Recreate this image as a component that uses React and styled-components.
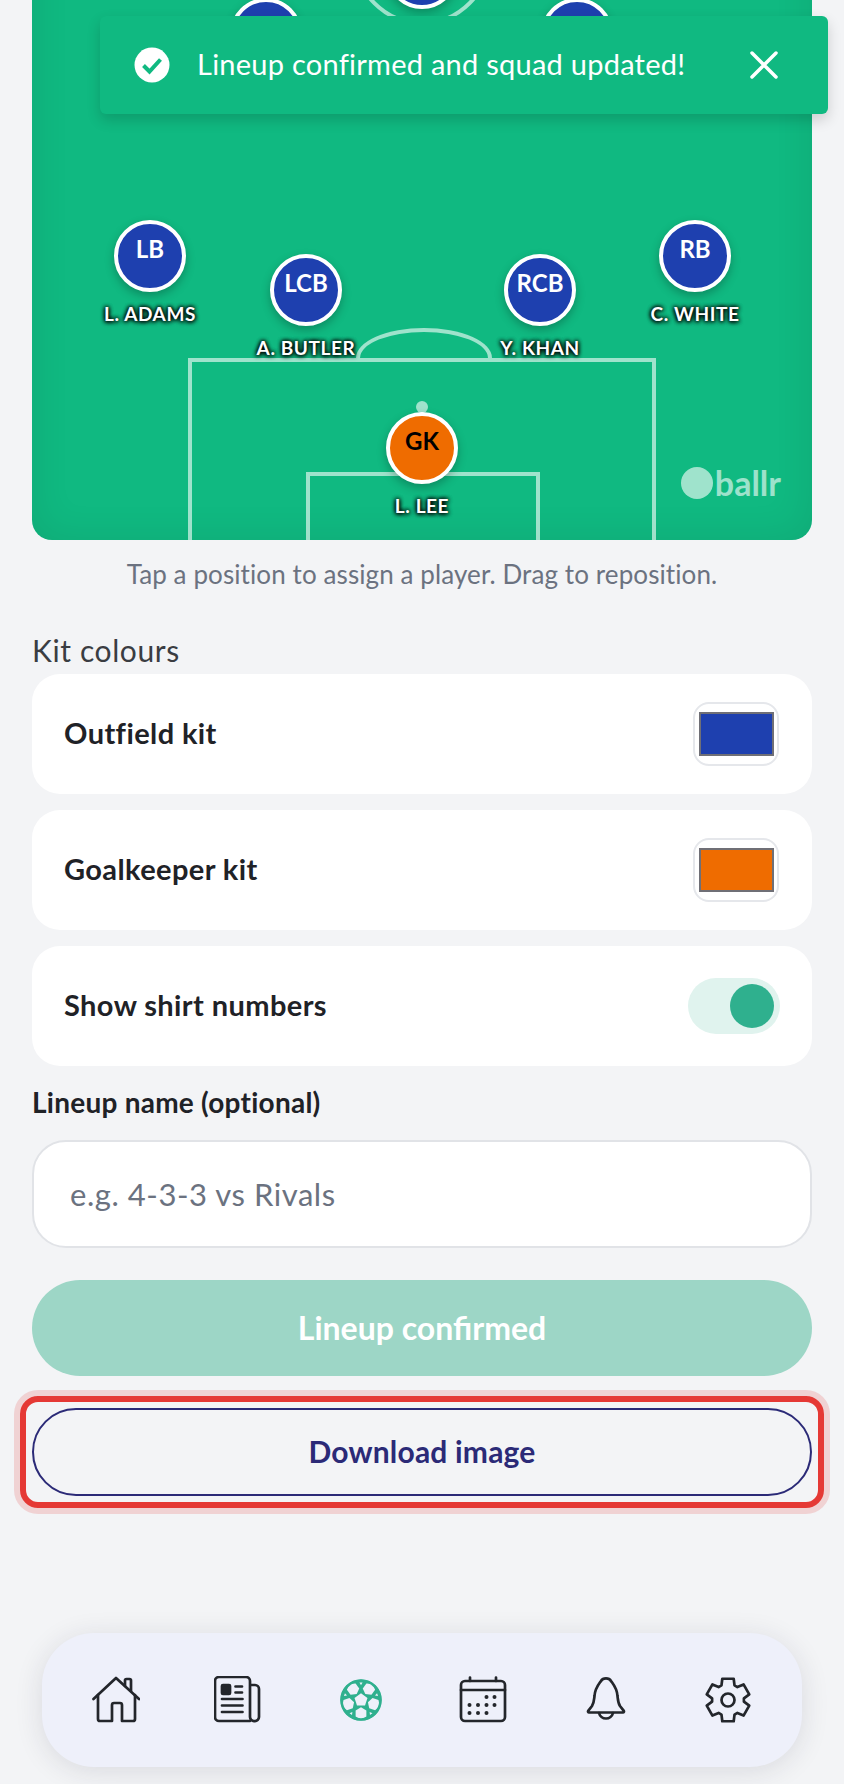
import React from "react";
import styled, { createGlobalStyle } from "styled-components";

const FONT = `"Lato", "Noto Sans", sans-serif`;

const Global = createGlobalStyle`
  html, body {
    margin: 0;
    height: 100%;
    overflow: hidden;
    background: #f3f4f6;
  }
  * { box-sizing: border-box; }
`;

const Screen = styled.div`
  position: relative;
  width: 844px;
  height: 1784px;
  overflow: hidden;
  font-family: ${FONT};
`;

// the page is scrolled, so the top of the pitch sits above the window
const Content = styled.main`
  display: flex;
  flex-direction: column;
  margin-top: -60px;
  padding: 0 32px;
`;

const Pitch = styled.section`
  position: relative;
  height: 600px;
  overflow: hidden;
  background: #10b981;
  border-radius: 0 0 20px 20px;
  box-shadow: inset 0 0 40px rgba(0, 0, 0, 0.09);
`;

const CentreCircle = styled.div`
  position: absolute;
  left: 321px;
  top: -53px;
  width: 138px;
  height: 138px;
  border: 4px solid rgba(255, 255, 255, 0.6);
  border-radius: 50%;
`;

const PenaltyBox = styled.div`
  position: absolute;
  left: 156px;
  top: 418px;
  width: 468px;
  height: 300px;
  border: 4px solid rgba(255, 255, 255, 0.6);
`;

const SixYardBox = styled.div`
  position: absolute;
  left: 274px;
  top: 532px;
  width: 234px;
  height: 200px;
  border: 4px solid rgba(255, 255, 255, 0.6);
`;

const PenaltyArc = styled.div`
  position: absolute;
  left: 324px;
  top: 388px;
  width: 136px;
  height: 30px;
  border: 4px solid rgba(255, 255, 255, 0.6);
  border-bottom: 0;
  border-radius: 68px 68px 0 0 / 30px 30px 0 0;
`;

const PenaltySpot = styled.div`
  position: absolute;
  left: 384px;
  top: 461px;
  width: 12px;
  height: 12px;
  border-radius: 50%;
  background: rgba(255, 255, 255, 0.6);
`;

const Player = styled.div`
  position: absolute;
  left: ${(p) => p.$x}px;
  top: ${(p) => p.$y}px;
  display: flex;
  flex-direction: column;
  align-items: center;
  width: 160px;
  margin-left: -80px;
`;

const Shirt = styled.div`
  display: flex;
  justify-content: center;
  width: 72px;
  height: 72px;
  padding-top: 11px;
  border: 4px solid #fff;
  border-radius: 50%;
  background: ${(p) => p.$colour};
  color: ${(p) => p.$text};
  font-size: 24px;
  font-weight: 700;
  line-height: 28px;
  box-shadow: 0 4px 10px rgba(0, 0, 0, 0.25);
`;

const PlayerName = styled.span`
  margin-top: 11px;
  color: #fff;
  font-size: 19px;
  font-weight: 700;
  letter-spacing: 0.6px;
  line-height: 22px;
  white-space: nowrap;
  text-shadow: 0 0 4px #000, 0 0 4px #000, 0 1px 5px #000;
`;

const Watermark = styled.div`
  position: absolute;
  right: 31px;
  bottom: 40px;
  display: flex;
  align-items: center;
  gap: 2px;
  color: rgba(255, 255, 255, 0.6);
  font-size: 34px;
  font-weight: 700;
  line-height: 34px;
`;

const WatermarkDot = styled.span`
  width: 32px;
  height: 32px;
  border-radius: 50%;
  background: rgba(255, 255, 255, 0.6);
`;

const Hint = styled.p`
  margin: 17px 0 0;
  color: #6b7280;
  font-size: 26px;
  letter-spacing: 0.1px;
  line-height: 34px;
  text-align: center;
`;

const SectionTitle = styled.h2`
  margin: 41px 0 0;
  color: #3a3d42;
  font-size: 30px;
  font-weight: 400;
  letter-spacing: 0.6px;
  line-height: 36px;
`;

const Rows = styled.div`
  display: flex;
  flex-direction: column;
  gap: 16px;
  margin-top: 6px;
`;

const Row = styled.div`
  display: flex;
  align-items: center;
  justify-content: space-between;
  height: 120px;
  padding: 0 32px;
  border-radius: 28px;
  background: #fff;
`;

const RowLabel = styled.span`
  margin-top: -3px;
  color: #1f2227;
  font-size: 29px;
  font-weight: 700;
  letter-spacing: 0.4px;
`;

const Swatch = styled.div`
  display: flex;
  align-items: center;
  justify-content: center;
  width: 86px;
  height: 64px;
  margin-right: 1px;
  border: 2px solid #e5e7eb;
  border-radius: 16px;
`;

const SwatchFill = styled.span`
  width: 75px;
  height: 44px;
  border: 2px solid #6f6f76;
  background: ${(p) => p.$colour};
`;

const Toggle = styled.div`
  display: flex;
  align-items: center;
  justify-content: flex-end;
  width: 92px;
  height: 56px;
  padding-right: 6px;
  border-radius: 28px;
  background: #e0f3ee;
`;

const Knob = styled.span`
  width: 44px;
  height: 44px;
  border-radius: 50%;
  background: #2fb08e;
`;

const FieldLabel = styled.label`
  margin-top: 20px;
  color: #1f2227;
  font-size: 28px;
  font-weight: 700;
  letter-spacing: 0.25px;
  line-height: 32px;
`;

const NameInput = styled.input`
  height: 108px;
  margin-top: 22px;
  padding: 0 36px;
  border: 2px solid #e1e3e7;
  border-radius: 34px;
  outline: 0;
  background: #fff;
  color: #1f2227;
  font-family: ${FONT};
  font-size: 31px;
  letter-spacing: 0.55px;

  &::placeholder {
    color: #6b7280;
    opacity: 1;
  }
`;

const Confirmed = styled.button`
  height: 96px;
  margin-top: 32px;
  padding-bottom: 2px;
  border: 0;
  border-radius: 48px;
  background: #9dd6c6;
  color: #fff;
  font-family: ${FONT};
  font-size: 32px;
  font-weight: 700;
`;

const Highlight = styled.div`
  display: flex;
  align-items: stretch;
  height: 112px;
  margin: 20px -12px 0;
  padding: 6px;
  border: 6px solid #e53935;
  border-radius: 18px;
  box-shadow: 0 0 0 6px rgba(229, 57, 53, 0.18);
`;

const DownloadButton = styled.button`
  flex: 1;
  padding-bottom: 3px;
  border: 2px solid #2b2a77;
  border-radius: 44px;
  background: transparent;
  color: #2b2a77;
  font-family: ${FONT};
  font-size: 30px;
  font-weight: 700;
  letter-spacing: 0.2px;
`;

const Toast = styled.div`
  position: absolute;
  left: 100px;
  top: 16px;
  display: flex;
  align-items: center;
  width: 728px;
  height: 98px;
  padding: 0 50px 0 34px;
  border-radius: 6px;
  background: #10b981;
  color: #fff;
  font-size: 29px;
  letter-spacing: 0.25px;
  box-shadow: 0 6px 14px rgba(0, 0, 0, 0.16);
`;

const ToastText = styled.span`
  flex: 1;
  margin: -3px 0 0 27px;
`;

const BottomNav = styled.nav`
  position: absolute;
  left: 42px;
  top: 1633px;
  display: flex;
  align-items: center;
  justify-content: space-between;
  width: 760px;
  height: 134px;
  padding: 0 50px;
  border-radius: 52px;
  background: #eef0fa;
  box-shadow: 0 4px 28px rgba(30, 34, 60, 0.12);
`;

const NavIcon = styled.svg`
  width: 48px;
  height: 48px;
  fill: none;
  stroke: ${(p) => p.$colour || "#23262b"};
  stroke-width: 2.7;
  stroke-linecap: round;
  stroke-linejoin: round;
`;

const point = (r, deg) => {
  const a = (deg * Math.PI) / 180;
  return `${(24 + r * Math.cos(a)).toFixed(2)} ${(24 + r * Math.sin(a)).toFixed(2)}`;
};

// six teeth, one straight up
const gearPath = () => {
  let d = "";
  for (let i = 0; i < 6; i++) {
    const c = -90 + i * 60;
    d += `${i ? "L" : "M"}${point(16, c - 24)} L${point(22, c - 15)} L${point(22, c + 15)} L${point(16, c + 24)} `;
  }
  return d + "Z";
};

// one panel of the ball, a ring of `sides` corners round a spot on the ball
const panel = (deg, dist, r, sides) => {
  const a = (deg * Math.PI) / 180;
  const cx = 24 + dist * Math.cos(a);
  const cy = 24 + dist * Math.sin(a);
  return Array.from({ length: sides }, (_, i) => {
    const t = ((deg + (i * 360) / sides) * Math.PI) / 180;
    return `${(cx + r * Math.cos(t)).toFixed(2)},${(cy + r * Math.sin(t)).toFixed(2)}`;
  }).join(" ");
};

const HomeIcon = () => (
  <NavIcon viewBox="0 0 48 48">
    <path d="M1.5 23 24 2l23 21" />
    <path d="M6 19v24a2 2 0 0 0 2 2h12V29a2 2 0 0 1 2-2h6a2 2 0 0 1 2 2v16h11a2 2 0 0 0 2-2V19" />
    <path d="M33 10V4.5A1.5 1.5 0 0 1 34.500 3h3A1.500 1.500 0 0 1 39 4.500V15" />
  </NavIcon>
);

const NewsIcon = () => (
  <NavIcon viewBox="0 0 48 48">
    <path d="M36 45H5a4 4 0 0 1-4-4V5a4 4 0 0 1 4-4h27a4 4 0 0 1 4 4v36a4 4 0 0 0 4.500 4 4 4 0 0 0 4.500-4V13a4 4 0 0 0-4-4h-5" />
    <rect x="8" y="9" width="8" height="9" rx="1" fill="#23262b" />
    <path d="M21.500 10.500H28M21.500 16.500H28M8 23h20.500M8 29.500h20.500M8 36h20.500" />
  </NavIcon>
);

const BallIcon = () => (
  <NavIcon viewBox="0 0 48 48" $colour="#2fb08e">
    <circle cx="24" cy="24" r="20.500" fill="#2fb08e" stroke="none" />
    <polygon points={panel(-90, 0, 6.8, 5)} fill="#eef0fa" stroke="none" />
    {[-126, -54, 18, 90, 162].map((d) => (
      <polygon key={d} points={panel(d, 13.5, 6.2, 6)} fill="#eef0fa" stroke="none" />
    ))}
    {[-90, -18, 54, 126, 198].map((d) => (
      <polygon key={d} points={panel(d + 180, -16.500, 1.8, 3)} fill="#eef0fa" stroke="none" />
    ))}
    <circle cx="24" cy="24" r="19.500" strokeWidth="2.600" />
  </NavIcon>
);

const calendarDots = [
  [27.5, 21], [35.5, 21],
  [10.5, 29], [19, 29], [27.5, 29], [35.5, 29],
  [10.5, 37], [19, 37], [27.5, 37],
];

const CalendarIcon = () => (
  <NavIcon viewBox="0 0 48 48">
    <rect x="2" y="5" width="44" height="40" rx="4" />
    <path d="M2 14h44M11 1.500V5M37 1.500V5" />
    {calendarDots.map(([x, y]) => (
      <circle key={`${x}-${y}`} cx={x} cy={y} r="2" fill="#23262b" stroke="none" />
    ))}
  </NavIcon>
);

const BellIcon = () => (
  <NavIcon viewBox="0 0 48 48">
    <path d="M7 36.500h34a1 1 0 0 0 .8-1.600L38 30c-2-3-2-6-2.500-10C35 12 31 8 29 5c-2-3.500-8-3.500-10 0-2 3-6 7-6.500 15-.5 4-.5 7-2.500 10l-3.800 4.900A1 1 0 0 0 7 36.500Z" />
    <path d="M17 37a7.200 7.200 0 0 0 14 0" />
  </NavIcon>
);

const GearIcon = () => (
  <NavIcon viewBox="0 0 48 48">
    <path d={gearPath()} />
    <circle cx="24" cy="24" r="6.500" />
  </NavIcon>
);

const CheckCircle = () => (
  <svg width="36" height="36" viewBox="0 0 36 36">
    <circle cx="18" cy="18" r="17.500" fill="#fff" />
    <path d="M9.500 18.500l6 6 11-12" fill="none" stroke="#10b981" strokeWidth="4" />
  </svg>
);

const CloseIcon = () => (
  <svg width="28" height="28" viewBox="0 0 28 28">
    <path d="M2 2l24 24M26 2 2 26" fill="none" stroke="#fff" strokeWidth="3.500" strokeLinecap="round" />
  </svg>
);

const BLUE = "#1e40af";
const ORANGE = "#ef6c00";

// the striker's label and the midfielders' names lie off screen or under the toast
const players = [
  { id: "lcm", pos: "LCM", x: 234, y: 58 },
  { id: "st", x: 390, y: -3 },
  { id: "rcm", pos: "RCM", x: 545, y: 58 },
  { id: "lb", pos: "LB", x: 118, y: 280, name: "L. ADAMS" },
  { id: "lcb", pos: "LCB", x: 274, y: 314, name: "A. BUTLER" },
  { id: "rcb", pos: "RCB", x: 508, y: 314, name: "Y. KHAN" },
  { id: "rb", pos: "RB", x: 663, y: 280, name: "C. WHITE" },
  { id: "gk", pos: "GK", x: 390, y: 472, name: "L. LEE", keeper: true },
];

export default function App() {
  return (
    <Screen>
      <Global />
      <Content>
        <Pitch>
          <CentreCircle />
          <PenaltyArc />
          <PenaltyBox />
          <SixYardBox />
          <PenaltySpot />
          {players.map((p) => (
            <Player key={p.id} $x={p.x} $y={p.y}>
              <Shirt $colour={p.keeper ? ORANGE : BLUE} $text={p.keeper ? "#000" : "#fff"}>
                {p.pos}
              </Shirt>
              {p.name && <PlayerName>{p.name}</PlayerName>}
            </Player>
          ))}
          <Watermark>
            <WatermarkDot />
            ballr
          </Watermark>
        </Pitch>
        <Hint>Tap a position to assign a player. Drag to reposition.</Hint>
        <SectionTitle>Kit colours</SectionTitle>
        <Rows>
          <Row>
            <RowLabel>Outfield kit</RowLabel>
            <Swatch>
              <SwatchFill $colour={BLUE} />
            </Swatch>
          </Row>
          <Row>
            <RowLabel>Goalkeeper kit</RowLabel>
            <Swatch>
              <SwatchFill $colour={ORANGE} />
            </Swatch>
          </Row>
          <Row>
            <RowLabel>Show shirt numbers</RowLabel>
            <Toggle>
              <Knob />
            </Toggle>
          </Row>
        </Rows>
        <FieldLabel>Lineup name (optional)</FieldLabel>
        <NameInput placeholder="e.g. 4-3-3 vs Rivals" />
        <Confirmed>Lineup confirmed</Confirmed>
        <Highlight>
          <DownloadButton>Download image</DownloadButton>
        </Highlight>
      </Content>
      <Toast>
        <CheckCircle />
        <ToastText>Lineup confirmed and squad updated!</ToastText>
        <CloseIcon />
      </Toast>
      <BottomNav>
        <HomeIcon />
        <NewsIcon />
        <BallIcon />
        <CalendarIcon />
        <BellIcon />
        <GearIcon />
      </BottomNav>
    </Screen>
  );
}
